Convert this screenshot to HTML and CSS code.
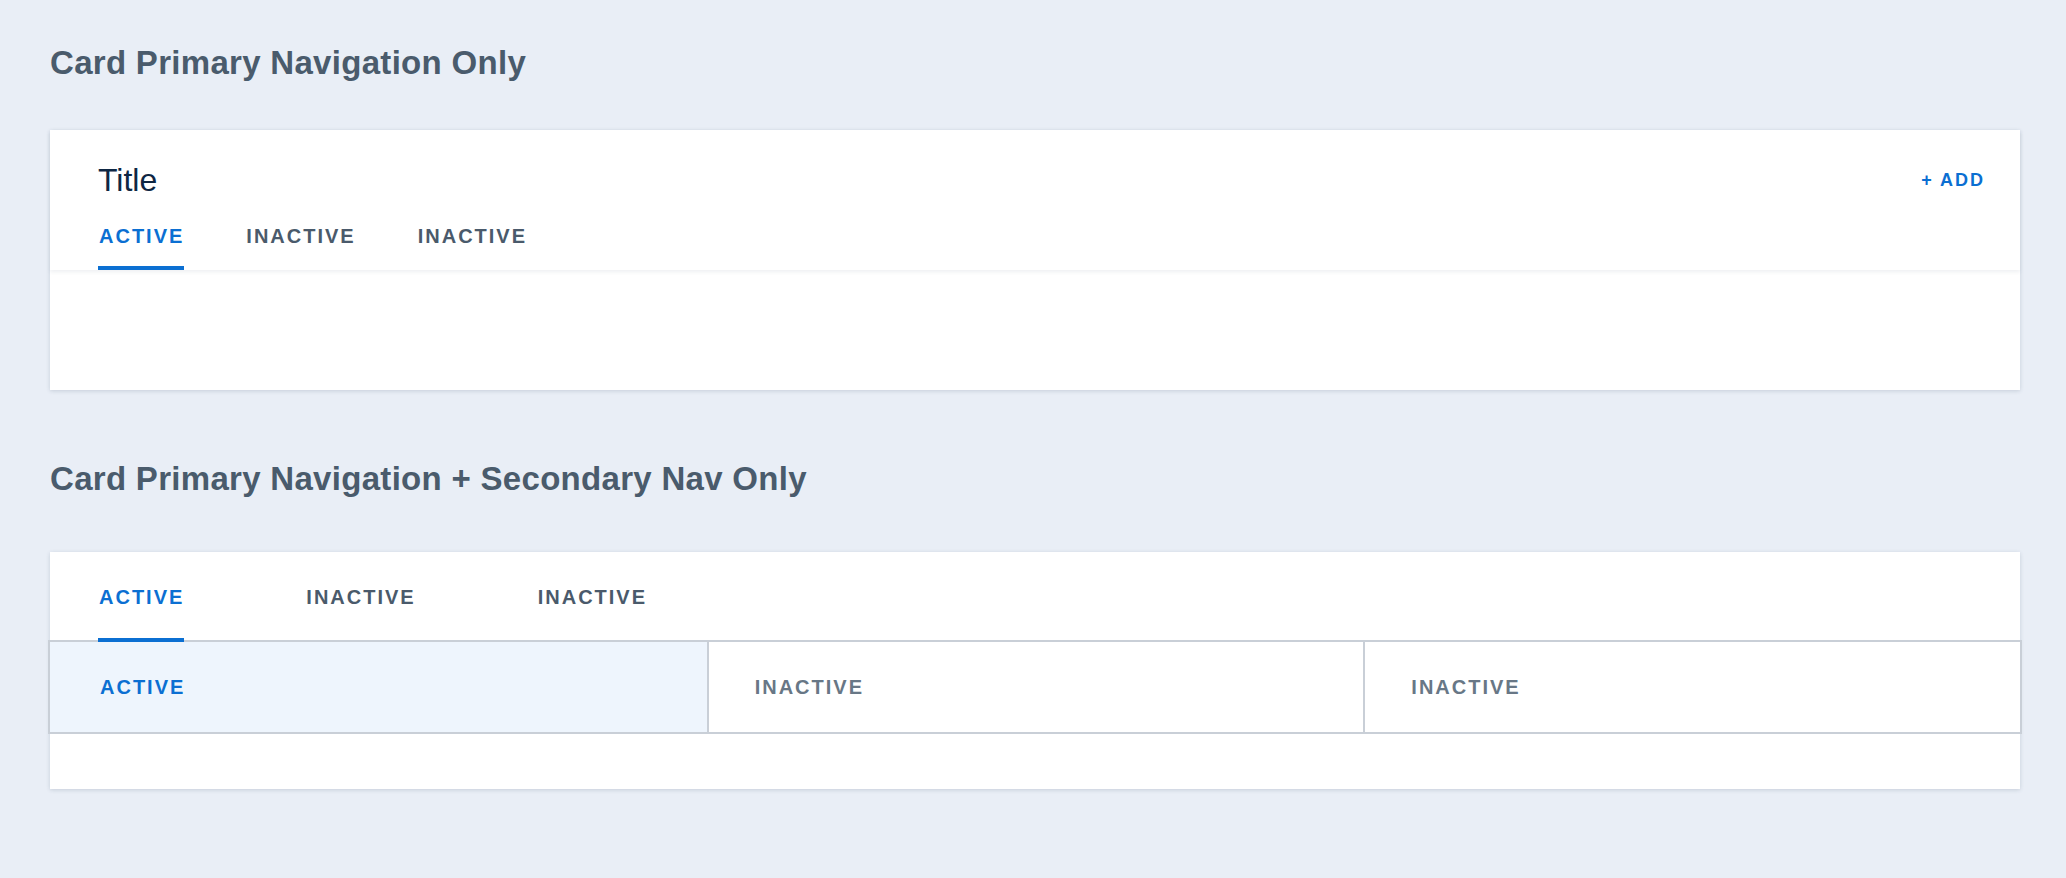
FILE: index.html
```html
<!DOCTYPE html>
<html lang="en">
<head>
<meta charset="utf-8">
<title>Card Navigation</title>
<link rel="stylesheet" href="styles.css">
</head>
<body>
<main class="page">
  <section class="section">
    <h2 class="section-title">Card Primary Navigation Only</h2>
    <div class="card">
      <header class="card-header">
        <div class="card-header-top">
          <h3 class="card-title">Title</h3>
          <button class="add-btn">+ ADD</button>
        </div>
        <nav class="tabs tabs-compact">
          <a class="tab tab-active">ACTIVE</a>
          <a class="tab">INACTIVE</a>
          <a class="tab">INACTIVE</a>
        </nav>
      </header>
      <div class="card-body card-body-tall"></div>
    </div>
  </section>

  <section class="section section-second">
    <h2 class="section-title section-title-second">Card Primary Navigation + Secondary Nav Only</h2>
    <div class="card">
      <nav class="tabs tabs-wide">
        <a class="tab tab-active">ACTIVE</a>
        <a class="tab">INACTIVE</a>
        <a class="tab">INACTIVE</a>
      </nav>
      <div class="subnav">
        <a class="subnav-cell subnav-active">ACTIVE</a>
        <a class="subnav-cell">INACTIVE</a>
        <a class="subnav-cell">INACTIVE</a>
      </div>
      <div class="card-body card-body-short"></div>
    </div>
  </section>
</main>
</body>
</html>
```

FILE: styles.css
```css
* { box-sizing: border-box; }

html, body {
  margin: 0;
  padding: 0;
  background: #e9eef6;
  font-family: "Liberation Sans", Arial, Helvetica, sans-serif;
}

.page {
  padding: 43px 46px 40px 50px;
}

.section-title {
  margin: 0 0 47px 0;
  font-size: 33px;
  line-height: 40px;
  font-weight: 700;
  letter-spacing: 0.3px;
  color: #4a5b6c;
}

.section-second {
  margin-top: 69px;
}

.section-title-second {
  margin-bottom: 53px;
}

.card {
  background: #ffffff;
  box-shadow: 0 1px 4px rgba(40, 60, 90, 0.18);
}

.card-header {
  position: relative;
  z-index: 1;
  padding: 30px 35px 0 48px;
  background: #ffffff;
  box-shadow: 0 2px 4px rgba(40, 60, 90, 0.08);
}

.card-header-top {
  display: flex;
  justify-content: space-between;
  align-items: flex-start;
}

.card-title {
  margin: 0;
  font-size: 32px;
  line-height: 40px;
  font-weight: 400;
  color: #0e2643;
}

.add-btn {
  margin: 9px 0 0 0;
  padding: 0;
  border: none;
  background: none;
  font-family: inherit;
  font-size: 18px;
  line-height: 22px;
  font-weight: 700;
  letter-spacing: 2px;
  color: #0b6fd2;
  cursor: pointer;
}

.tabs {
  display: flex;
}

.tabs-compact {
  margin-top: 24px;
}

.tabs-wide {
  position: relative;
  z-index: 1;
  padding: 33px 0 0 48px;
  margin-bottom: -2px;
}

.tab {
  display: block;
  padding: 0 0 18px 1px;
  font-size: 20px;
  line-height: 24px;
  font-weight: 700;
  letter-spacing: 2px;
  color: #4a5a6b;
  border-bottom: 4px solid transparent;
  cursor: pointer;
}

.tabs-compact .tab {
  margin-right: 61px;
}

.tabs-wide .tab {
  margin-right: 121px;
  padding-bottom: 29px;
}

.tab-active {
  color: #0b6fd2;
  border-bottom-color: #0b6fd2;
}

.subnav {
  display: grid;
  grid-template-columns: 1fr 1fr 1fr;
  margin: 0 -2px;
  border: 2px solid #c9cfd7;
}

.subnav-cell {
  display: block;
  padding: 33px 0 33px 46px;
  font-size: 20px;
  line-height: 24px;
  font-weight: 700;
  letter-spacing: 2px;
  color: #687786;
  border-left: 2px solid #c9cfd7;
}

.subnav-cell:first-child {
  border-left: none;
  padding-left: 50px;
}

.subnav-active {
  background: #eef5fd;
  color: #0b6fd2;
}

.card-body-tall {
  height: 120px;
}

.card-body-short {
  height: 55px;
}
```
